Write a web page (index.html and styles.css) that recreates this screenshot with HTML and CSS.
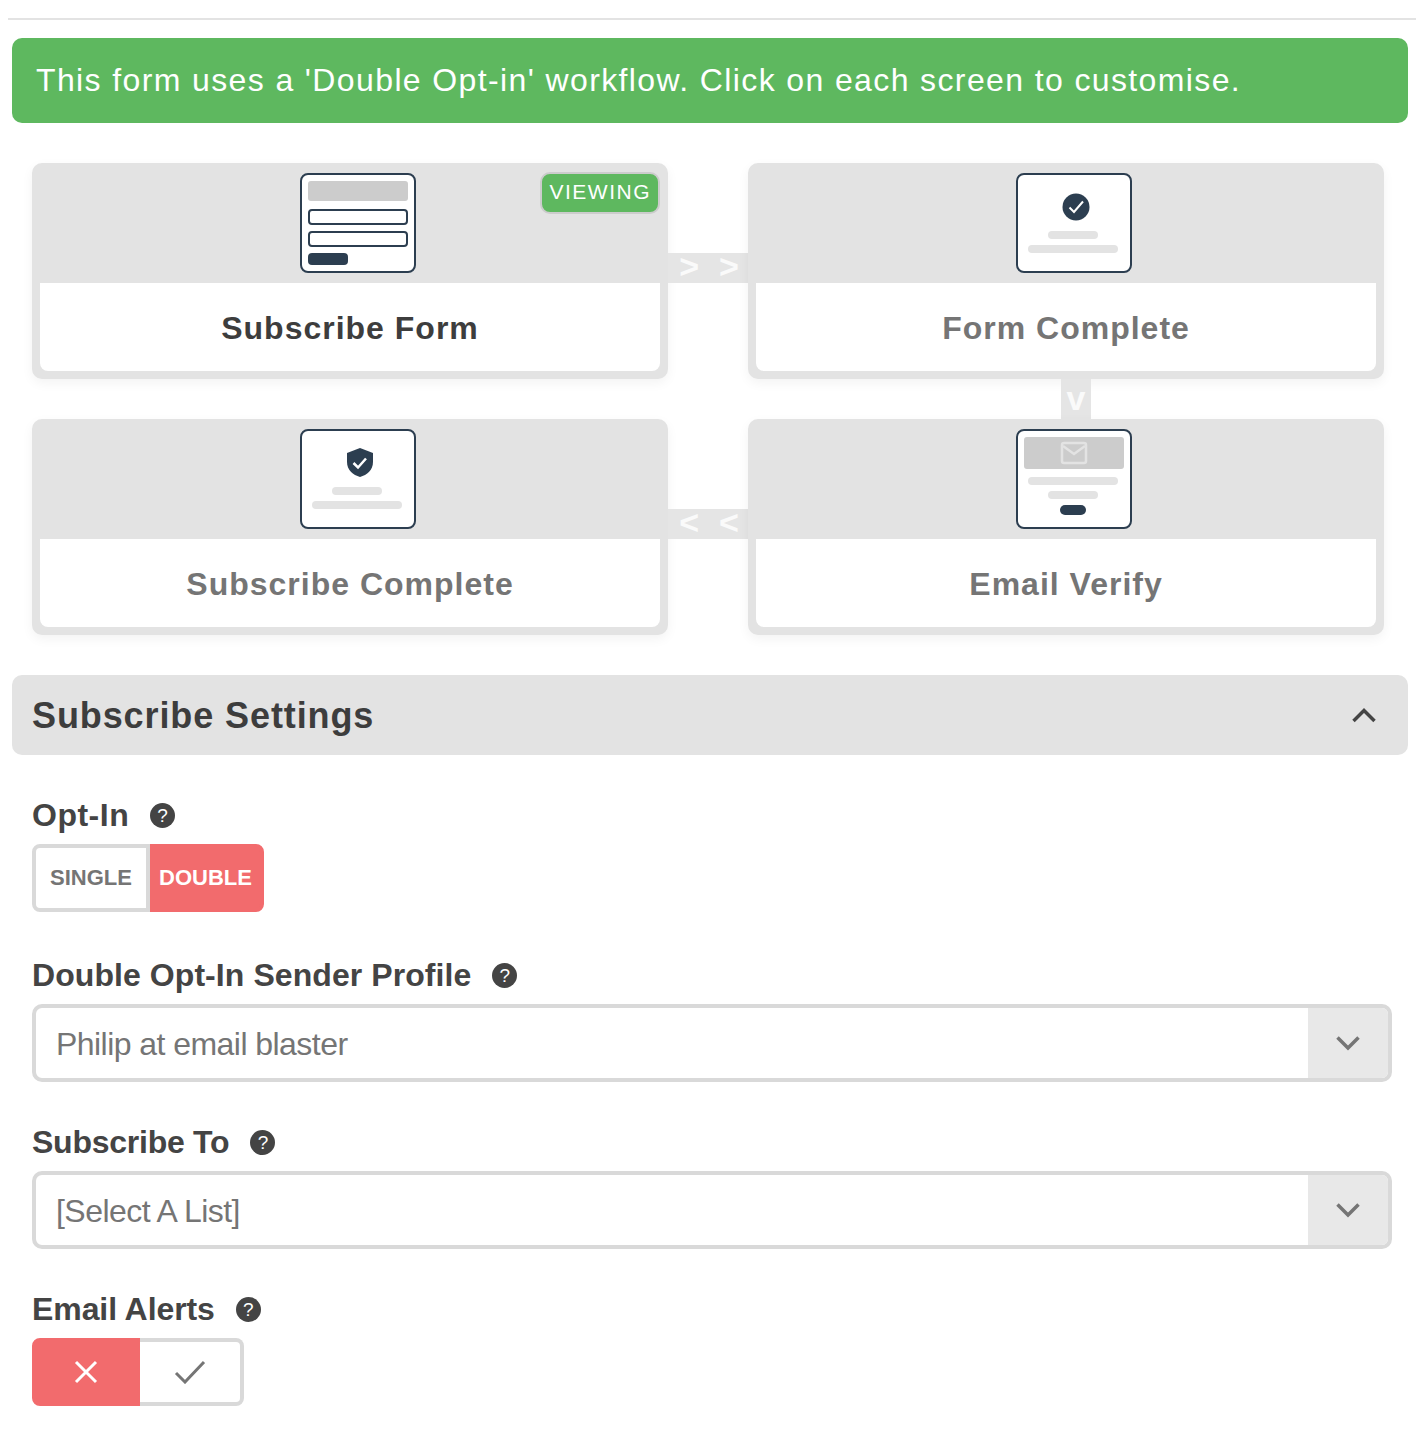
FILE: index.html
```html
<!DOCTYPE html>
<html lang="en">

<head>
    <meta charset="UTF-8">
    <title>Subscribe Form Workflow</title>
    <link rel="stylesheet" href="styles.css">
</head>

<body>

    <hr class="top-rule">

    <div class="alert">This form uses a 'Double Opt-in' workflow. Click on each screen to customise.</div>

    <!-- Workflow screens -->
    <div class="workflow">
        <div class="screen active">
            <div class="screen-head">
                <svg class="thumb" width="116" height="100" viewBox="0 0 116 100">
                    <rect x="1" y="1" width="114" height="98" rx="7" fill="#fff" stroke="#2c3e50" stroke-width="2"/>
                    <rect x="8" y="8" width="100" height="20" rx="3" fill="#ccc"/>
                    <rect x="9" y="37" width="98" height="14" rx="3" fill="#fff" stroke="#2c3e50" stroke-width="2"/>
                    <rect x="9" y="59" width="98" height="14" rx="3" fill="#fff" stroke="#2c3e50" stroke-width="2"/>
                    <rect x="8" y="80" width="40" height="12" rx="4" fill="#2c3e50"/>
                </svg>
                <span class="badge">VIEWING</span>
            </div>
            <div class="screen-title">Subscribe Form</div>
            <div class="link link-right"><span>&gt;</span><span>&gt;</span></div>
        </div>

        <div class="screen">
            <div class="screen-head">
                <svg class="thumb" width="116" height="100" viewBox="0 0 116 100">
                    <rect x="1" y="1" width="114" height="98" rx="7" fill="#fff" stroke="#2c3e50" stroke-width="2"/>
                    <circle cx="60" cy="34" r="13.500" fill="#2c3e50"/>
                    <path d="M53.500 34.500 L58 39 L67 28.500" fill="none" stroke="#fff" stroke-width="2"/>
                    <rect x="32" y="58" width="50" height="8" rx="4" fill="#e3e3e3"/>
                    <rect x="12" y="72" width="90" height="8" rx="4" fill="#e3e3e3"/>
                </svg>
            </div>
            <div class="screen-title">Form Complete</div>
            <div class="link link-down"><span>v</span></div>
        </div>

        <div class="screen">
            <div class="screen-head">
                <svg class="thumb" width="116" height="100" viewBox="0 0 116 100">
                    <rect x="1" y="1" width="114" height="98" rx="7" fill="#fff" stroke="#2c3e50" stroke-width="2"/>
                    <path d="M60 19 L73 24 V33 C73 41 67 46 60 48 C53 46 47 41 47 33 V24 Z" fill="#2c3e50"/>
                    <path d="M53.500 34 L58 38.500 L66 29.500" fill="none" stroke="#fff" stroke-width="2.500"/>
                    <rect x="32" y="58" width="50" height="8" rx="4" fill="#e3e3e3"/>
                    <rect x="12" y="72" width="90" height="8" rx="4" fill="#e3e3e3"/>
                </svg>
            </div>
            <div class="screen-title">Subscribe Complete</div>
            <div class="link link-right"><span>&lt;</span><span>&lt;</span></div>
        </div>

        <div class="screen">
            <div class="screen-head">
                <svg class="thumb" width="116" height="100" viewBox="0 0 116 100">
                    <rect x="1" y="1" width="114" height="98" rx="7" fill="#fff" stroke="#2c3e50" stroke-width="2"/>
                    <rect x="8" y="8" width="100" height="32" rx="3" fill="#ccc"/>
                    <rect x="46" y="14" width="24" height="20" rx="2" fill="none" stroke="#e3e3e3" stroke-width="2.500"/>
                    <path d="M47 17 L58 25 L69 17" fill="none" stroke="#e3e3e3" stroke-width="2.500"/>
                    <rect x="12" y="48" width="90" height="8" rx="4" fill="#e3e3e3"/>
                    <rect x="32" y="62" width="50" height="8" rx="4" fill="#e3e3e3"/>
                    <rect x="44" y="76" width="26" height="10" rx="5" fill="#2c3e50"/>
                </svg>
            </div>
            <div class="screen-title">Email Verify</div>
        </div>
    </div>

    <!-- Settings -->
    <div class="section-head">
        <h2>Subscribe Settings</h2>
        <svg width="26" height="18" viewBox="0 0 26 18">
            <path d="M2.500 15 L13 4.500 L23.500 15" fill="none" stroke="#444" stroke-width="3.500"/>
        </svg>
    </div>

    <div class="fields">
        <div class="field field-first">
            <label class="field-label label-optin">Opt-In <span class="help">?</span></label>
            <div class="toggle">
                <button class="toggle-opt toggle-single">SINGLE</button>
                <button class="toggle-opt toggle-double on">DOUBLE</button>
            </div>
        </div>

        <div class="field">
            <label class="field-label label-sender">Double Opt-In Sender Profile <span class="help">?</span></label>
            <div class="select">
                <span class="select-value">Philip at email blaster</span>
                <span class="select-arrow">
                    <svg width="26" height="16" viewBox="0 0 26 16">
                        <path d="M2.500 2.500 L13 13 L23.500 2.500" fill="none" stroke="#757575" stroke-width="3.500"/>
                    </svg>
                </span>
            </div>
        </div>

        <div class="field">
            <label class="field-label label-list">Subscribe To <span class="help">?</span></label>
            <div class="select">
                <span class="select-value">[Select A List]</span>
                <span class="select-arrow">
                    <svg width="26" height="16" viewBox="0 0 26 16">
                        <path d="M2.500 2.500 L13 13 L23.500 2.500" fill="none" stroke="#757575" stroke-width="3.500"/>
                    </svg>
                </span>
            </div>
        </div>

        <div class="field">
            <label class="field-label label-alerts">Email Alerts <span class="help">?</span></label>
            <div class="toggle toggle-icons">
                <button class="toggle-opt toggle-no on">
                    <svg width="24" height="24" viewBox="0 0 24 24">
                        <path d="M2 2 L22 22 M22 2 L2 22" fill="none" stroke="#fff" stroke-width="3"/>
                    </svg>
                </button>
                <button class="toggle-opt toggle-yes">
                    <svg width="32" height="24" viewBox="0 0 32 24">
                        <path d="M2 13 L11 22 L30 2" fill="none" stroke="#757575" stroke-width="3"/>
                    </svg>
                </button>
            </div>
        </div>
    </div>

</body>

</html>
```

FILE: styles.css
```css
* {
    margin: 0;
    padding: 0;
    box-sizing: border-box;
    font-family: 'Liberation Sans', Arial, sans-serif;
}

body {
    background: #fff;
    color: #444;
}

.top-rule {
    height: 2px;
    margin: 18px 6px 0 8px;
    border: none;
    background: #e3e3e3;
}

.alert {
    height: 85px;
    margin: 18px 14px 0 12px;
    padding: 0 24px;
    border-radius: 10px;
    background: #5eb85f;
    color: #fff;
    font-size: 32px;
    line-height: 85px;
    letter-spacing: 1.38px;
    white-space: nowrap;
}

.workflow {
    display: grid;
    grid-template-columns: 636px 636px;
    gap: 40px 80px;
    margin: 40px 0 0 32px;
}

.screen {
    position: relative;
    height: 216px;
    border: 8px solid #e3e3e3;
    border-radius: 10px;
    background: #e3e3e3;
    box-shadow: 0 4px 12px rgba(0, 0, 0, 0.05);
}

.screen-head {
    position: relative;
    display: flex;
    justify-content: center;
    align-items: flex-start;
    height: 112px;
    padding: 2px 0 0 16px;
}

.badge {
    position: absolute;
    top: 1px;
    right: 0;
    height: 42px;
    padding: 0 7px;
    border: 2px solid #ccc;
    border-radius: 10px;
    background: #5eb85f;
    color: #fff;
    font-size: 21px;
    line-height: 36px;
    letter-spacing: 1.5px;
}

.screen-title {
    height: 88px;
    border-radius: 0 0 8px 8px;
    background: #fff;
    color: #757575;
    font-size: 32px;
    font-weight: bold;
    line-height: 90px;
    letter-spacing: 1px;
    text-align: center;
}

.screen.active .screen-title {
    color: #3d3d3d;
}

/* connector strips between the screens */
.link {
    position: absolute;
    display: flex;
    justify-content: center;
    background: #e5e5e5;
    color: #fafafa;
    font-size: 34px;
    font-weight: bold;
}

.link-right {
    top: 82px;
    right: -88px;
    width: 80px;
    height: 30px;
    padding-left: 2px;
    gap: 20px;
    line-height: 27px;
}

.link-down {
    top: 208px;
    left: 305px;
    width: 30px;
    height: 40px;
    line-height: 38px;
}

.section-head {
    display: flex;
    justify-content: space-between;
    align-items: center;
    height: 80px;
    margin: 40px 14px 0 12px;
    padding: 0 31px 0 20px;
    border-radius: 10px;
    background: #e3e3e3;
}

.section-head h2 {
    padding-top: 2px;
    color: #3d3d3d;
    font-size: 36px;
    line-height: 80px;
    letter-spacing: 0.9px;
}

.fields {
    padding: 40px 30px 0 32px;
}

.field {
    margin-bottom: 40px;
}

.field-first {
    margin-bottom: 43px;
}

.field-label {
    display: flex;
    align-items: center;
    gap: 21px;
    height: 49px;
    padding-bottom: 9px;
    color: #444;
    font-size: 32px;
    font-weight: bold;
}

/* the label widths differ a little in the original font */
.label-optin {
    letter-spacing: 0.5px;
}

.label-sender {
    letter-spacing: 0.07px;
}

.label-list {
    letter-spacing: -0.25px;
}

.label-alerts {
    letter-spacing: -0.08px;
}

.help {
    width: 25px;
    height: 25px;
    border-radius: 50%;
    background: #444;
    color: #fff;
    font-size: 19px;
    font-weight: normal;
    line-height: 25px;
    text-align: center;
}

.toggle {
    display: flex;
    width: 232px;
    height: 68px;
}

.toggle-icons {
    width: 212px;
}

.toggle-opt {
    display: flex;
    justify-content: center;
    align-items: center;
    border: 4px solid #d9d9d9;
    background: #fff;
    color: #757575;
    font-size: 22px;
    font-weight: bold;
}

.toggle-opt.on {
    border-color: #f26b6d;
    background: #f26b6d;
    color: #fff;
}

.toggle-single {
    width: 118px;
    border-radius: 8px 0 0 8px;
}

.toggle-double {
    width: 114px;
    padding-right: 3px;
    border-radius: 0 8px 8px 0;
}

.toggle-no {
    width: 108px;
    border-radius: 8px 0 0 8px;
}

.toggle-yes {
    width: 104px;
    border-left: none;
    border-radius: 0 8px 8px 0;
}

.select {
    display: flex;
    height: 78px;
    border: 4px solid #d9d9d9;
    border-radius: 10px;
    overflow: hidden;
}

.select-value {
    flex: 1;
    padding-left: 20px;
    color: #757575;
    font-size: 32px;
    line-height: 72px;
    letter-spacing: -0.55px;
}

.select-arrow {
    display: flex;
    justify-content: center;
    align-items: center;
    width: 80px;
    background: #e8e8e8;
}
```
